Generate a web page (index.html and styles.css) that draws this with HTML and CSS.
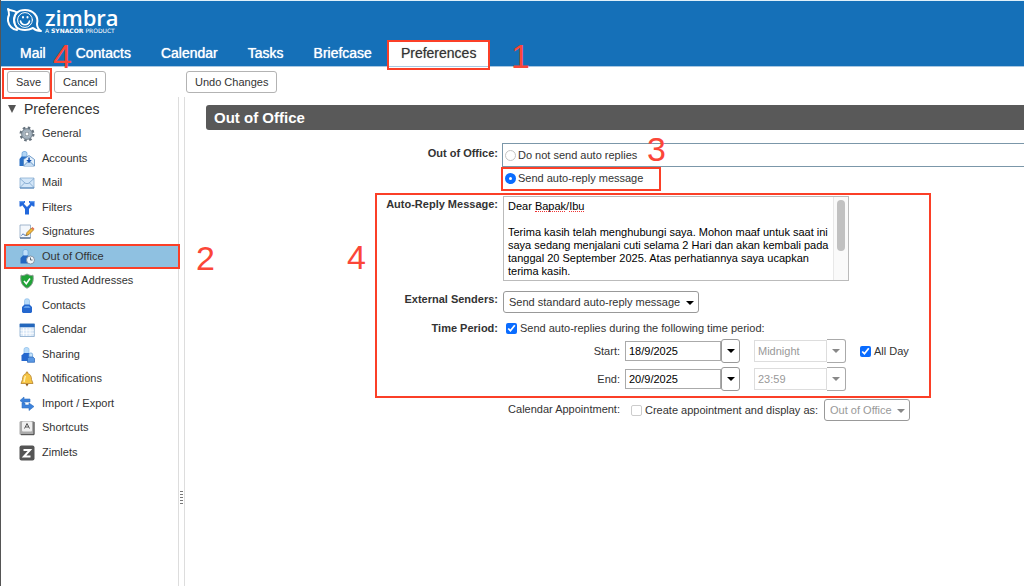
FILE: index.html
```html
<!DOCTYPE html>
<html lang="en">
<head>
    <meta charset="UTF-8" />
    <meta name="viewport" content="width=device-width, initial-scale=1" />
    <title>Zimbra: Preferences</title>
    <link rel="stylesheet" href="styles.css">
</head>
<body>

<header class="banner">
  <a class="logo" href="#">
    <svg class="logo-mark" viewBox="0 0 36 25" fill="none" stroke="#fff" stroke-width="2" stroke-linecap="round" stroke-linejoin="round">
      <path d="M9 4C6 2 3 3 1 1c1 2 1 4 1 6-2 4-1 9 2 12 2 2 4 3 6 3" />
      <path d="M11 4C6 8 6 16 11 21" stroke-width="1.6" />
      <path d="M18 2C11 2 7 6 7 12s4 10 11 10c4 0 6-1 8-2 2 2 5 3 8 3-3-2-4-4-4-7 2-8-4-14-12-14z" />
      <circle cx="18" cy="12" r="7.4" stroke-width="1" />
      <path d="M13.500 13c1 5 8 5 9 0" stroke-width="1.600" />
      <path d="M16 9v.5M20.500 9v.5" />
    </svg>
    <span class="logo-text">
      <span class="logo-name">zimbra</span>
      <span class="logo-tag">A <b>SYNACOR</b> PRODUCT</span>
    </span>
  </a>
  <nav class="tabs">
    <a href="#">Mail</a>
    <a href="#">Contacts</a>
    <a href="#">Calendar</a>
    <a href="#">Tasks</a>
    <a href="#">Briefcase</a>
    <a href="#" class="active">Preferences<span class="mark-box mark-tab"></span></a>
    <span class="mark-num num-one">1</span>
    <span class="mark-num num-save">4</span>
  </nav>
</header>

<div class="toolbar">
  <div class="toolbar-left">
    <button type="button">Save</button>
    <button type="button">Cancel</button>
    <span class="mark-box mark-save"></span>
  </div>
  <button type="button">Undo Changes</button>
</div>

<div class="content">
  <aside class="sidebar">
    <h2><span class="arrow"></span>Preferences</h2>
    <ul>
      <li><a href="#">
        <svg viewBox="0 0 16 16"><circle cx="8" cy="8" r="6.300" fill="none" stroke="#66727d" stroke-width="2.400" stroke-dasharray="2.500 2.450" /><circle cx="8" cy="8" r="4" fill="none" stroke="#a3b1bd" stroke-width="3" /><circle cx="8" cy="8" r="5.400" fill="none" stroke="#66747f" stroke-width=".8" /><circle cx="8" cy="8" r="2" fill="#fff" stroke="#5b6a76" stroke-width=".8" /></svg>
        General</a></li>
      <li><a href="#">
        <svg viewBox="0 0 16 16"><rect x="3" y=".5" width="5" height="7" rx="2" fill="#b3d6f5" stroke="#5e9bd6" stroke-width=".7" /><path d="M.5 15V8l2-2.500h5l2 2V15z" fill="#2b70c6" /><path d="M4.500 8.500l5.500-4 5.500 4V15h-11z" fill="#e3f0fc" stroke="#5285bd" stroke-width=".8" /><path d="M4.500 15l4-4h3l4 4" fill="#c3dbf3" stroke="#5285bd" stroke-width=".8" /><path d="M9.300 6.500h1.500V9h2L10 12 7.300 9h2z" fill="#1551b0" /></svg>
        Accounts</a></li>
      <li><a href="#">
        <svg viewBox="0 0 16 16"><path d="M1 3h14v10H1z" fill="#d3e6f8" stroke="#8aaed2" stroke-width=".8" /><path d="M1 3.500l5.500 5h3l5.500-5M1 12.500l5-5M15 12.500l-5-5" fill="none" stroke="#7ba3cc" stroke-width=".8" /><path d="M1 13h14" stroke="#4a7fb5" /></svg>
        Mail</a></li>
      <li><a href="#">
        <svg viewBox="0 0 16 16"><path d="M.5 1H6v1.500L4.800 3.800 8 7l3.200-3.200L10 2.500V1h5.500v5.500H14l-1.200-1.200L10 9v5.500H6V9L3.200 5.300 2 6.500H.5z" fill="#2268dc" /><path d="M1 1.700h4M11 1.700h4" stroke="#6fabf5" /></svg>
        Filters</a></li>
      <li><a href="#">
        <svg viewBox="0 0 16 16"><path d="M1 1h10.500v13H1z" fill="#f3f7fc" stroke="#8da6c2" stroke-width=".8" /><path d="M2.500 11.500c2-3 2-.5 3-.5s1 1 3 0" fill="none" stroke="#2355a5" stroke-width=".9" /><path d="M1 14h10.500" stroke="#4b6a90" stroke-width="1.300" /><path d="M7 11.500l1-3 4.500-4.500 2 2L10 10.500z" fill="#f3b83c" stroke="#9a6b17" stroke-width=".7" /><path d="M12.500 4l1-1 2 2-1 1z" fill="#e0654c" /></svg>
        Signatures</a></li>
      <li class="selected"><a href="#">
        <svg viewBox="0 0 16 16"><rect x="4" y=".5" width="5" height="7" rx="2" fill="#c0e0fa" stroke="#6aa7e0" stroke-width=".7" /><path d="M1.500 14.500V9L4 6.500h5l2 2v6z" fill="#2467c0" /><circle cx="11.500" cy="11" r="4" fill="#f4f8fc" stroke="#7a8ca0" stroke-width=".9" /><path d="M11.500 8.500V11h2" fill="none" stroke="#4a5a6c" stroke-width=".9" /></svg>
        Out of Office</a><span class="mark-box mark-side"></span><span class="mark-num num-side">2</span></li>
      <li><a href="#">
        <svg viewBox="0 0 16 16"><path d="M8 1c2 1.200 4 2 6 1.200C15 8.500 13 13 8 15.200 3 13 1 8.500 2 2.200 4 3 6 2.200 8 1z" fill="#20a337" stroke="#8a9a90" /><path d="M5 8l2.300 2.700L11 5.500" fill="none" stroke="#fff" stroke-width="1.600" /></svg>
        Trusted Addresses</a></li>
      <li><a href="#">
        <svg viewBox="0 0 16 16"><rect x="5.500" y=".8" width="5" height="8" rx="2" fill="#b9dcfa" stroke="#8dbdea" stroke-width=".7" /><path d="M4 15l-1-1V9l2.500-2.500h5L13 9v5l-1 1z" fill="#2467ce" /><path d="M4.500 10l1.500-2h4l1.500 2z" fill="#5f9deb" /></svg>
        Contacts</a></li>
      <li><a href="#">
        <svg viewBox="0 0 16 16"><path d="M1 2h14.300v12.500H1z" fill="#dce9f7" stroke="#86a8cc" stroke-width=".8" /><path d="M.7 1.700h15v3.500h-15z" fill="#2467bc" /><path d="M1.500 8.200h13.500M1.500 11.300h13.500M4.500 6v8M7.700 6v8M11 6v8" stroke="#fff" stroke-width=".8" /></svg>
        Calendar</a></li>
      <li><a href="#">
        <svg viewBox="0 0 16 16"><rect x="5" y=".5" width="5" height="7" rx="2" fill="#b9dcfa" stroke="#8dbdea" stroke-width=".7" /><path d="M2.500 14V8.500L5 6h5l2 2.500V14z" fill="#2467ce" /><rect x="10" y="6" width="3.600" height="5" rx="1.500" fill="#c5e2fa" stroke="#5b9bd8" stroke-width=".7" /><path d="M8.500 15.300V11.500l1.500-1.500h4l1.500 1.500v3.800z" fill="#5a98e4" stroke="#2763b6" stroke-width=".7" /></svg>
        Sharing</a></li>
      <li><a href="#">
        <svg viewBox="0 0 16 16"><path d="M7.300 1h1.400v1.500C11.500 3.200 12.500 5.500 12.500 8.500L14 12.500H2L3.500 8.500c0-3 1-5.300 3.800-6z" fill="#f6c544" stroke="#b5822a" stroke-width=".8" /><path d="M6.500 5C5.500 7 5.500 9 5 11" fill="none" stroke="#fff0b0" stroke-width="1.500" /><path d="M6.500 13h3L8 15.500z" fill="#8d5b1a" /></svg>
        Notifications</a></li>
      <li><a href="#">
        <svg viewBox="0 0 16 16"><path d="M1 4.500L5 1v2h6v3H5v2z" fill="#3c82dc" stroke="#2f6fbf" stroke-width=".6" /><path d="M3 7v5h7v2.500l5-4L10 7v2H6V7z" fill="#3c82dc" stroke="#2f6fbf" stroke-width=".6" /></svg>
        Import / Export</a></li>
      <li><a href="#">
        <svg viewBox="0 0 16 16"><rect x=".5" y="1" width="15" height="14" rx="1.500" fill="#aaa" /><path d="M15 2v12.700H2" fill="none" stroke="#444" /><rect x="3" y="1.500" width="10" height="10" rx="1" fill="#efefef" /><path d="M5.500 8.500l2.500-5 2.500 5M6.500 7h3" fill="none" stroke="#555" /></svg>
        Shortcuts</a></li>
      <li><a href="#">
        <svg viewBox="0 0 16 16"><rect x=".5" y=".5" width="15" height="15" rx="2" fill="#555" /><path d="M4.500 5h6.500l-6 6.500h6.500" fill="none" stroke="#fff" stroke-width="2" /></svg>
        Zimlets</a></li>
    </ul>
  </aside>

  <div class="sash"><span class="grip"></span></div>

  <main>
    <h1>Out of Office</h1>
    <form>
      <div class="row">
        <span class="label">Out of Office:</span>
        <div class="choices">
          <label class="choice focused"><input type="radio" name="ooo"> Do not send auto replies</label>
          <label class="choice"><input type="radio" name="ooo" checked> Send auto-reply message</label>
          <span class="mark-box mark-radio"></span>
          <span class="mark-num num-radio">3</span>
        </div>
      </div>

      <div class="reply-group">
        <div class="row">
          <label class="label" for="message">Auto-Reply Message:</label>
          <div class="message">
            <textarea id="message" rows="6" spellcheck="false">Dear Bapak/Ibu

Terima kasih telah menghubungi saya. Mohon maaf untuk saat ini saya sedang menjalani cuti selama 2 Hari dan akan kembali pada tanggal 20 September 2025. Atas perhatiannya saya ucapkan terima kasih.</textarea>
            <div class="track"><div class="thumb"></div></div>
            <span class="typo typo-bapak"></span>
            <span class="typo typo-ibu"></span>
          </div>
        </div>
        <div class="row senders">
          <label class="label" for="external">External Senders:</label>
          <span class="select">
            <select id="external"><option>Send standard auto-reply message</option></select>
          </span>
        </div>
        <div class="row period">
          <span class="label">Time Period:</span>
          <label class="check"><input type="checkbox" checked> Send auto-replies during the following time period:</label>
        </div>
        <div class="row dates">
          <label class="sub-label" for="start">Start:</label>
          <span class="combo"><input type="text" id="start" value="18/9/2025"><button type="button" aria-label="Pick start date"></button></span>
          <span class="combo time"><input type="text" value="Midnight" aria-label="Start time" disabled><button type="button" aria-label="Pick start time" disabled></button></span>
          <label class="check"><input type="checkbox" checked> All Day</label>
        </div>
        <div class="row dates">
          <label class="sub-label" for="end">End:</label>
          <span class="combo"><input type="text" id="end" value="20/9/2025"><button type="button" aria-label="Pick end date"></button></span>
          <span class="combo time"><input type="text" value="23:59" aria-label="End time" disabled><button type="button" aria-label="Pick end time" disabled></button></span>
        </div>
        <span class="mark-box mark-group"></span>
        <span class="mark-num num-group">4</span>
      </div>

      <div class="row appointment">
        <span class="sub-label">Calendar Appointment:</span>
        <label class="check"><input type="checkbox" class="empty"> Create appointment and display as:</label>
        <span class="select disabled">
          <select aria-label="Display as" disabled><option>Out of Office</option></select>
        </span>
      </div>
    </form>
  </main>
</div>

</body>
</html>
```
FILE: styles.css
```css
* { box-sizing: border-box; }
body {
  margin: 0;
  min-height: 100vh;
  display: flex;
  flex-direction: column;
  border-left: 1px solid #555;
  background: #fff;
  color: #333;
  font-family: "Liberation Sans", Arial, Helvetica, sans-serif;
  font-size: 11px;
  line-height: 14px;
  overflow: hidden;
}
a { color: inherit; text-decoration: none; }
button, input, select, textarea { font: inherit; color: inherit; margin: 0; }

/* header */
.banner {
  background: #1570b8;
  color: #fff;
  border-top: 1px solid #dff0fa;
  border-bottom: 1px solid #a9c8e2;
}
.logo {
  display: flex;
  gap: 2px;
  height: 39px;
  padding: 7px 0 0 6px;
}
.logo-mark { width: 36px; height: 25px; }
.logo-text { display: flex; flex-direction: column; }
.logo-name {
  font-family: "Open Sans", sans-serif;
  font-size: 22px;
  font-weight: 600;
  line-height: 19px;
}
.logo-tag {
  font-family: "DejaVu Sans", sans-serif;
  font-size: 6px;
  line-height: 7px;
}
.tabs {
  position: relative;
  display: flex;
  padding-left: 4px;
  font-size: 14px;
  line-height: 26px;
}
.tabs a {
  position: relative;
  padding: 0 15px;
  text-shadow: 0 0 1px #fff;
}
.tabs .active {
  padding: 0 14px;
  background: #fff;
  color: #333;
  text-shadow: 0 0 1px #999;
}

/* toolbar */
.toolbar {
  display: flex;
  padding: 4px 0 4px 6px;
}
.toolbar-left {
  position: relative;
  display: flex;
  gap: 4px;
  width: 179px;
}
.toolbar button {
  height: 22px;
  padding: 0 8px;
  background: #fff;
  border: 1px solid #b3b3b3;
  border-radius: 3px;
}

/* sidebar */
.content { flex: 1; display: flex; }
.sidebar { width: 177px; padding-top: 3px; }
.sidebar h2 {
  display: flex;
  align-items: center;
  gap: 8px;
  margin: 0 0 4px;
  padding-left: 7px;
  font-size: 14px;
  font-weight: 400;
  line-height: 18px;
}
.arrow {
  border: 4px solid transparent;
  border-top: 8px solid #555;
  border-bottom: 0;
}
.sidebar ul { list-style: none; margin: 0; padding: 0; }
.sidebar li { position: relative; height: 24px; padding: 0 0 1px 4px; }
.sidebar li:nth-child(odd) { height: 25px; }
.sidebar a {
  display: flex;
  gap: 7px;
  height: 100%;
  padding-left: 14px;
  line-height: 22px;
}
.sidebar svg { width: 16px; height: 16px; margin-top: 4px; }
.selected a { background: #8fc1e1; }

.sash {
  width: 7px;
  border: solid #ddd;
  border-width: 0 1px;
  display: flex;
  flex-direction: column;
  align-items: center;
  justify-content: flex-end;
  padding-bottom: 82px;
}
.grip {
  width: 3px;
  height: 13px;
  background: repeating-linear-gradient(#777 0 1px, #fff 1px 3px);
}

/* form */
main { flex: 1; min-width: 0; padding: 8px 0 0 21px; }
main h1 {
  margin: 0 0 13px;
  padding-left: 8px;
  background: #595959;
  border-radius: 3px 0 0 3px;
  color: #fff;
  font-size: 15px;
  line-height: 25px;
}
.row { display: flex; gap: 5px; }
.label { width: 292px; text-align: right; font-weight: 700; }
.row > .label { padding-top: 3px; }
.choices { position: relative; flex: 1; margin-left: -1px; }
.choice {
  display: flex;
  align-items: center;
  gap: 2px;
  height: 22px;
  padding-left: 3px;
}
.choice.focused {
  height: 24px;
  padding-left: 2px;
  border: 1px solid #7b97a9;
  border-right: 0;
}
.choice input {
  appearance: none;
  width: 11px;
  height: 11px;
  border: 1px solid #c4c4c4;
  border-radius: 50%;
  background: #fff;
}
.choice input:checked { border: 4px solid #0a6cff; }

.reply-group { position: relative; padding-top: 7px; }
.reply-group .row { margin-bottom: 10px; }
.reply-group .label { padding-top: 1px; }
.reply-group .senders { margin-bottom: 7px; }
.reply-group .period { margin-bottom: 4px; }
.reply-group .dates { margin-bottom: 4px; }
.message {
  position: relative;
  display: flex;
  width: 346px;
  border: 1px solid #bbb;
}
.message textarea {
  flex: 1;
  padding: 3px 2px 2px 4px;
  border: 0;
  outline: 0;
  resize: none;
  overflow: hidden;
  color: #000;
  line-height: 13px;
}
.track {
  width: 15px;
  padding: 3px;
  background: #fafafa;
  border-left: 1px solid #e8e8e8;
}
.thumb { height: 51px; border-radius: 4px; background: #c1c1c1; }
.typo { position: absolute; top: 14px; border-bottom: 1px dotted #e33; }
.typo-bapak { left: 31px; width: 30px; }
.typo-ibu { left: 65px; width: 15px; }

.select { position: relative; }
.select select {
  appearance: none;
  height: 22px;
  padding: 0 17px 0 5px;
  border: 1px solid #999;
  border-radius: 3px;
  background: #fff;
}
.select::after {
  content: "";
  position: absolute;
  top: 10px;
  right: 5px;
  border: 4px solid transparent;
  border-top-color: #000;
  border-bottom: 0;
  pointer-events: none;
}
.select.disabled select { color: #999; opacity: 1; }
.select.disabled::after { border-top-color: #888; }

.check { display: flex; align-items: center; gap: 3px; }
.check input { width: 11px; height: 11px; accent-color: #0a6cff; }
.check .empty { appearance: none; border: 1px solid #ccc; border-radius: 2px; }
.period .check { padding: 1px 0 0 3px; }

.dates { align-items: center; }
.sub-label { width: 414px; text-align: right; }
.combo { display: flex; align-items: center; }
.combo input {
  width: 96px;
  height: 20px;
  padding: 0 3px;
  border: 1px solid #aaa;
  background: #fff;
  color: #000;
}
.combo button {
  display: flex;
  align-items: center;
  justify-content: center;
  width: 19px;
  height: 24px;
  padding: 0;
  border: 1px solid #999;
  border-radius: 3px;
  background: #fff;
}
.combo button::after {
  content: "";
  border: 4px solid transparent;
  border-top-color: #000;
  border-bottom: 0;
}
.time { margin: 0 9px; }
.time input { width: 73px; height: 22px; border-color: #ddd; color: #999; }
.time button { border-left: 0; border-radius: 0 3px 3px 0; border-color: #aaa; }
.time button::after { border-top-color: #888; }

.appointment { gap: 6px; margin-top: 8px; }
.appointment .sub-label { padding-top: 3px; }
.appointment .check { padding-left: 5px; }

/* step marks drawn over the page */
.mark-box {
  position: absolute;
  border: 2px solid #fb3f27;
  pointer-events: none;
}
.mark-num {
  position: absolute;
  color: #fb4638;
  font-size: 34px;
  line-height: 34px;
  text-shadow: none;
}
.mark-tab { inset: 0 0 -4px; }
.num-one { left: 510px; top: -1px; }
.num-save { left: 52px; top: -1px; }
.mark-save { left: -5px; top: -3px; width: 50px; height: 31px; }
.mark-side { inset: -1px -2px 0 3px; }
.num-side { left: 195px; top: -4px; }
.mark-radio { left: -1px; top: 24px; width: 160px; height: 24px; }
.num-radio { left: 145px; top: -11px; }
.mark-group { left: 169px; top: 4px; width: 556px; bottom: -7px; }
.num-group { left: 141px; top: 51px; }
```
